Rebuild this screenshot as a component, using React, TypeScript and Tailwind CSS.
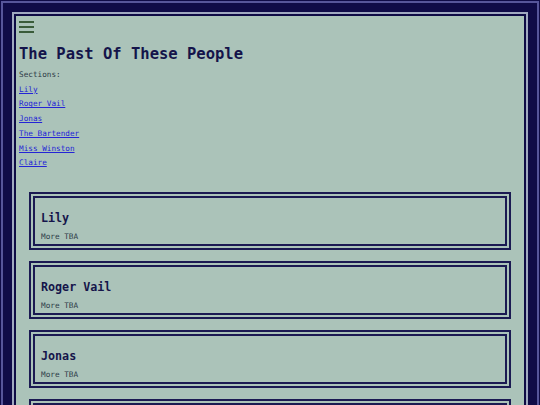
import React from 'react';

const people = ['Lily', 'Roger Vail', 'Jonas', 'The Bartender', 'Miss Winston', 'Claire'];

// Three-bar menu toggle
const MenuIcon: React.FC = () => (
    <svg width="15" height="13" viewBox="0 0 15 13" className="block">
        <rect x="0" y="1" width="15" height="2" fill="#3a5c3a" />
        <rect x="0" y="6" width="15" height="2" fill="#3a5c3a" />
        <rect x="0" y="11" width="15" height="2" fill="#3a5c3a" />
    </svg>
);

const PersonCard: React.FC<{ name: string }> = ({ name }) => (
    <div className="border-[6px] border-double border-[#1b1a52] pl-[6px] pt-[11px] pb-px mb-[11px]">
        <h2 className="text-[11.7px] leading-[18px] font-bold text-[#15154a]">{name}</h2>
        <p className="mt-[4px] text-[7.7px] leading-[12px] text-[#2c3a46]">More TBA</p>
    </div>
);

export default function App() {
    return (
        <div
            className="min-h-screen bg-[#0f0b47] p-px"
            style={{ fontFamily: '"DejaVu Sans Mono", "Liberation Mono", monospace' }}
        >
            {/* Outer frame */}
            <div className="border-2 border-[#56559a] p-[9px]">
                <div className="border-2 border-[#a0a9c0]">
                    <div className="border-2 border-[#0e0b45] bg-[#abc3b9] px-[3px] pt-[4px] pb-[10px]">
                        <MenuIcon />

                        <h1 className="mt-[11px] text-[15.5px] leading-[20px] font-bold text-[#14144a]">
                            The Past Of These People
                        </h1>

                        {/* Section index */}
                        <div className="mt-[4px] text-[7.7px] leading-[14.7px]">
                            <p className="text-[#2c3a46]">Sections:</p>
                            {people.map((name) => (
                                <p key={name}>
                                    <a href="#" className="text-[#2424d6] underline">
                                        {name}
                                    </a>
                                </p>
                            ))}
                        </div>

                        <div className="mt-[21px] px-[10px]">
                            {people.map((name) => (
                                <PersonCard key={name} name={name} />
                            ))}
                        </div>
                    </div>
                </div>
            </div>
        </div>
    );
}
